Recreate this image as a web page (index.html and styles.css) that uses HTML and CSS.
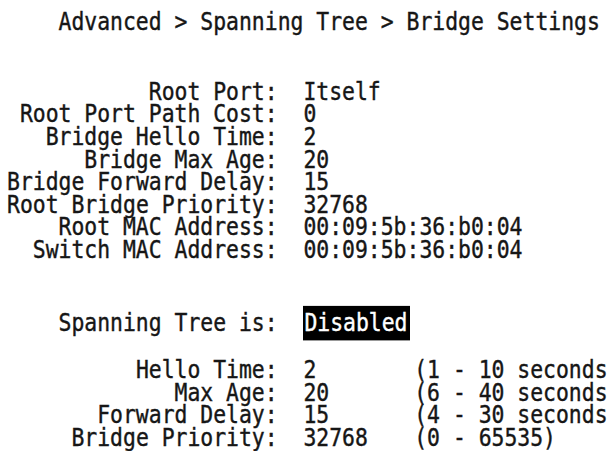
FILE: index.html
```html
<!DOCTYPE html>
<html lang="en">
<head>
<meta charset="utf-8">
<title>Bridge Settings</title>
<link rel="stylesheet" href="styles.css">
</head>
<body>
<main class="screen">
  <div class="crumb">Advanced &gt; Spanning Tree &gt; Bridge Settings</div>

  <div class="info">
    <span class="lbl">Root Port:</span><span class="val">Itself</span>
    <span class="lbl">Root Port Path Cost:</span><span class="val">0</span>
    <span class="lbl">Bridge Hello Time:</span><span class="val">2</span>
    <span class="lbl">Bridge Max Age:</span><span class="val">20</span>
    <span class="lbl">Bridge Forward Delay:</span><span class="val">15</span>
    <span class="lbl">Root Bridge Priority:</span><span class="val">32768</span>
    <span class="lbl">Root MAC Address:</span><span class="val">00:09:5b:36:b0:04</span>
    <span class="lbl">Switch MAC Address:</span><span class="val">00:09:5b:36:b0:04</span>
  </div>

  <div class="state">
    <span class="lbl">Spanning Tree is:</span><span class="val"><span class="hl">Disabled</span></span>
  </div>

  <div class="params">
    <span class="lbl">Hello Time:</span><span class="val">2</span><span class="rng">(1 - 10 seconds)</span>
    <span class="lbl">Max Age:</span><span class="val">20</span><span class="rng">(6 - 40 seconds)</span>
    <span class="lbl">Forward Delay:</span><span class="val">15</span><span class="rng">(4 - 30 seconds)</span>
    <span class="lbl">Bridge Priority:</span><span class="val">32768</span><span class="rng">(0 - 65535)</span>
  </div>
</main>
</body>
</html>
```

FILE: styles.css
```css
html, body {
  margin: 0;
  padding: 0;
  background: #ffffff;
  overflow: hidden;
  width: 609px;
  height: 451px;
}

.screen {
  font-family: "DejaVu Sans Mono", "Liberation Mono", monospace;
  font-size: 21.42px;
  line-height: 19.65px;
  color: #161616;
  -webkit-text-stroke: 0.35px #161616;
  padding: 8.7px 0 0 7px;
  white-space: nowrap;
  transform: scaleY(1.15);
  transform-origin: 0 0;
}

.crumb {
  padding-left: 4ch;
}

.info,
.state,
.params {
  display: grid;
  column-gap: 2ch;
}

.info {
  grid-template-columns: 21ch auto;
  margin-top: 41.2px;
}

.state {
  grid-template-columns: 21ch auto;
  margin-top: 44.1px;
}

.params {
  grid-template-columns: 21ch 6.6ch auto;
  margin-top: 21.65px;
}

.lbl {
  text-align: right;
}

.val,
.rng {
  white-space: pre;
}

.hl {
  background: #000000;
  color: #ffffff;
  -webkit-text-stroke: 0.35px #ffffff;
  padding: 2px 2px 3px 1px;
}
```
